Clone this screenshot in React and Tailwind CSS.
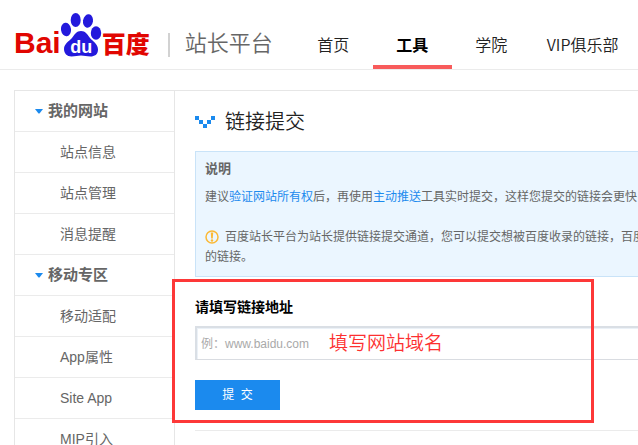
import clsx from "clsx";

const NAV = [
  { label: "首页" },
  { label: "工具", active: true },
  { label: "学院" },
  { label: "VIP俱乐部" },
];

const GROUPS = [
  { title: "我的网站", items: ["站点信息", "站点管理", "消息提醒"] },
  { title: "移动专区", items: ["移动适配", "App属性", "Site App", "MIP引入"] },
];

function Logo() {
  return (
    <a
      href="#"
      className="flex items-end font-['Liberation_Sans','Noto_Sans_CJK_SC',sans-serif] font-bold text-[#e10601]"
    >
      <span className="text-[30px] leading-7">Bai</span>
      <span className="relative h-11 w-[41px]">
        <svg viewBox="0.5 0 41 44" className="h-11 w-[41px] fill-[#2319dc]">
          <ellipse cx="5.500" cy="16.500" rx="5" ry="6.700" transform="rotate(-8 5.5 16.5)" />
          <ellipse cx="15.200" cy="7" rx="5" ry="7" />
          <ellipse cx="27.500" cy="8" rx="5" ry="6.800" transform="rotate(10 27.5 8)" />
          <ellipse cx="35.500" cy="20" rx="5.200" ry="6.800" />
          <path d="M20.500 18C25 18 27 21.500 29.500 25C32 28 37.500 31 37.500 36.500C37.500 41.500 34 43.500 30 43.500C26 43.500 24 42.500 20.500 42.500C17 42.500 15 43.500 11 43.500C6.500 43.500 3.500 40.500 3.500 36C3.500 30.500 9 28 11.500 25C14 21.500 16 18 20.500 18Z" />
        </svg>
        <span className="absolute inset-x-0 bottom-0 text-center text-lg leading-5 text-white">
          du
        </span>
      </span>
      <span className="text-2xl leading-[25px] font-black">百度</span>
    </a>
  );
}

function Header() {
  return (
    <header className="flex h-[70px] border-b border-[#ebebeb] pl-[14px]">
      <div className="flex h-[57px] items-end">
        <Logo />
        <span className="ml-[18px] h-6 w-0.5 bg-[#d2d2d2]" />
        <span className="ml-[15px] text-[22px] leading-[26px] font-[350] text-[#666]">
          站长平台
        </span>
      </div>
      <nav className="ml-[21px] flex font-['Noto_Sans_CJK_SC',sans-serif]">
        {NAV.map((item) => (
          <a
            key={item.label}
            href="#"
            className={clsx(
              "min-w-[79px] border-b-4 px-4 pt-8 text-center text-base leading-6 whitespace-nowrap",
              item.active
                ? "border-[#f85b5b] font-bold text-black"
                : "border-transparent font-[350] text-[#222]"
            )}
          >
            {item.label}
          </a>
        ))}
      </nav>
    </header>
  );
}

function Sidebar() {
  return (
    <aside className="w-[161px] shrink-0 border-x border-[#e6e6e6] text-[#666]">
      {GROUPS.map((group) => (
        <section key={group.title}>
          <h2 className="flex h-[41px] items-center border-b border-[#ebebeb] pl-5 text-[15px] font-bold">
            <svg viewBox="0 0 8 5" className="mr-[5px] h-[5px] w-2 fill-[#1b8aee]">
              <path d="M0 0H8L4.500 4.500H3.500Z" />
            </svg>
            {group.title}
          </h2>
          <ul>
            {group.items.map((item) => (
              <li key={item} className="h-[41px] border-b border-[#ebebeb] pl-[45px] text-sm leading-10">
                <a href="#">{item}</a>
              </li>
            ))}
          </ul>
        </section>
      ))}
    </aside>
  );
}

function Notice() {
  return (
    <section className="mt-[15px] h-[126px] border border-[#c9e3f8] bg-[#ebf6ff] pt-[7px] pl-[9px] text-xs leading-5 whitespace-nowrap text-[#666]">
      <h2 className="text-[13px] leading-5 font-bold">说明</h2>
      <p className="mt-2">
        建议
        <a href="#" className="text-[#1b8aee]">验证网站所有权</a>
        后，再使用
        <a href="#" className="text-[#1b8aee]">主动推送</a>
        工具实时提交，这样您提交的链接会更快
      </p>
      <p className="mt-5 flex items-center">
        <svg viewBox="0 0 14 14" className="mr-[6px] h-[14px] w-[14px] shrink-0">
          <circle cx="7" cy="7" r="6" fill="none" stroke="#fbb936" strokeWidth="1.500" />
          <path d="M5.800 2.500H8.200L7.800 8.500H6.200Z" fill="#fbb936" />
          <circle cx="7" cy="10.500" r="1.200" fill="#fbb936" />
        </svg>
        百度站长平台为站长提供链接提交通道，您可以提交想被百度收录的链接，百度
      </p>
      <p>的链接。</p>
    </section>
  );
}

function SubmitForm() {
  return (
    <form className="relative pt-5 pb-5" onSubmit={(e) => e.preventDefault()}>
      <label htmlFor="site-url" className="block text-sm leading-5 font-bold text-black">
        请填写链接地址
      </label>
      <input
        id="site-url"
        type="text"
        placeholder="例：www.baidu.com"
        className="mt-[9px] block h-[34px] w-full border-t-2 border-b border-l-2 border-t-[#dadfe5] border-b-[#d9dce1] border-l-[#dadfe5] pl-1 text-xs shadow-[inset_1px_1px_0_#ebf1f7] outline-none placeholder:text-[#a9a9a9]"
      />
      <button type="submit" className="mt-5 block h-[30px] w-[85px] bg-[#1b8aee] text-xs text-white">
        提&nbsp;&nbsp;交
      </button>
      {/* tutorial callout drawn over the form */}
      <div className="pointer-events-none absolute top-[2px] -left-[23px] h-36 w-[422px] border-3 border-[#fd3838] pt-12 pl-[154px] text-[19px] leading-7 font-[350] text-[#fd3030]">
        填写网站域名
      </div>
    </form>
  );
}

export default function App() {
  return (
    <div className="h-screen overflow-hidden bg-white font-['Liberation_Sans','Noto_Sans_CJK_SC',sans-serif]">
      <Header />
      <div className="mt-5 ml-[14px] flex border-t border-[#e6e6e6]">
        <Sidebar />
        <main className="-mr-1 min-w-0 flex-1 pl-5">
          <h1 className="flex items-center gap-[10px] pt-[17px] text-xl leading-7 font-[350] text-[#222]">
            <svg viewBox="0 0 20 12" className="h-3 w-5 fill-[#1b8aee]">
              <path d="M0 0h4v4h-4zM4 4h4v4h-4zM8 8h4v4h-4zM12 4h4v4h-4zM16 0h4v4h-4z" />
            </svg>
            链接提交
          </h1>
          <Notice />
          <SubmitForm />
          <hr className="border-[#ebebeb]" />
        </main>
      </div>
    </div>
  );
}
